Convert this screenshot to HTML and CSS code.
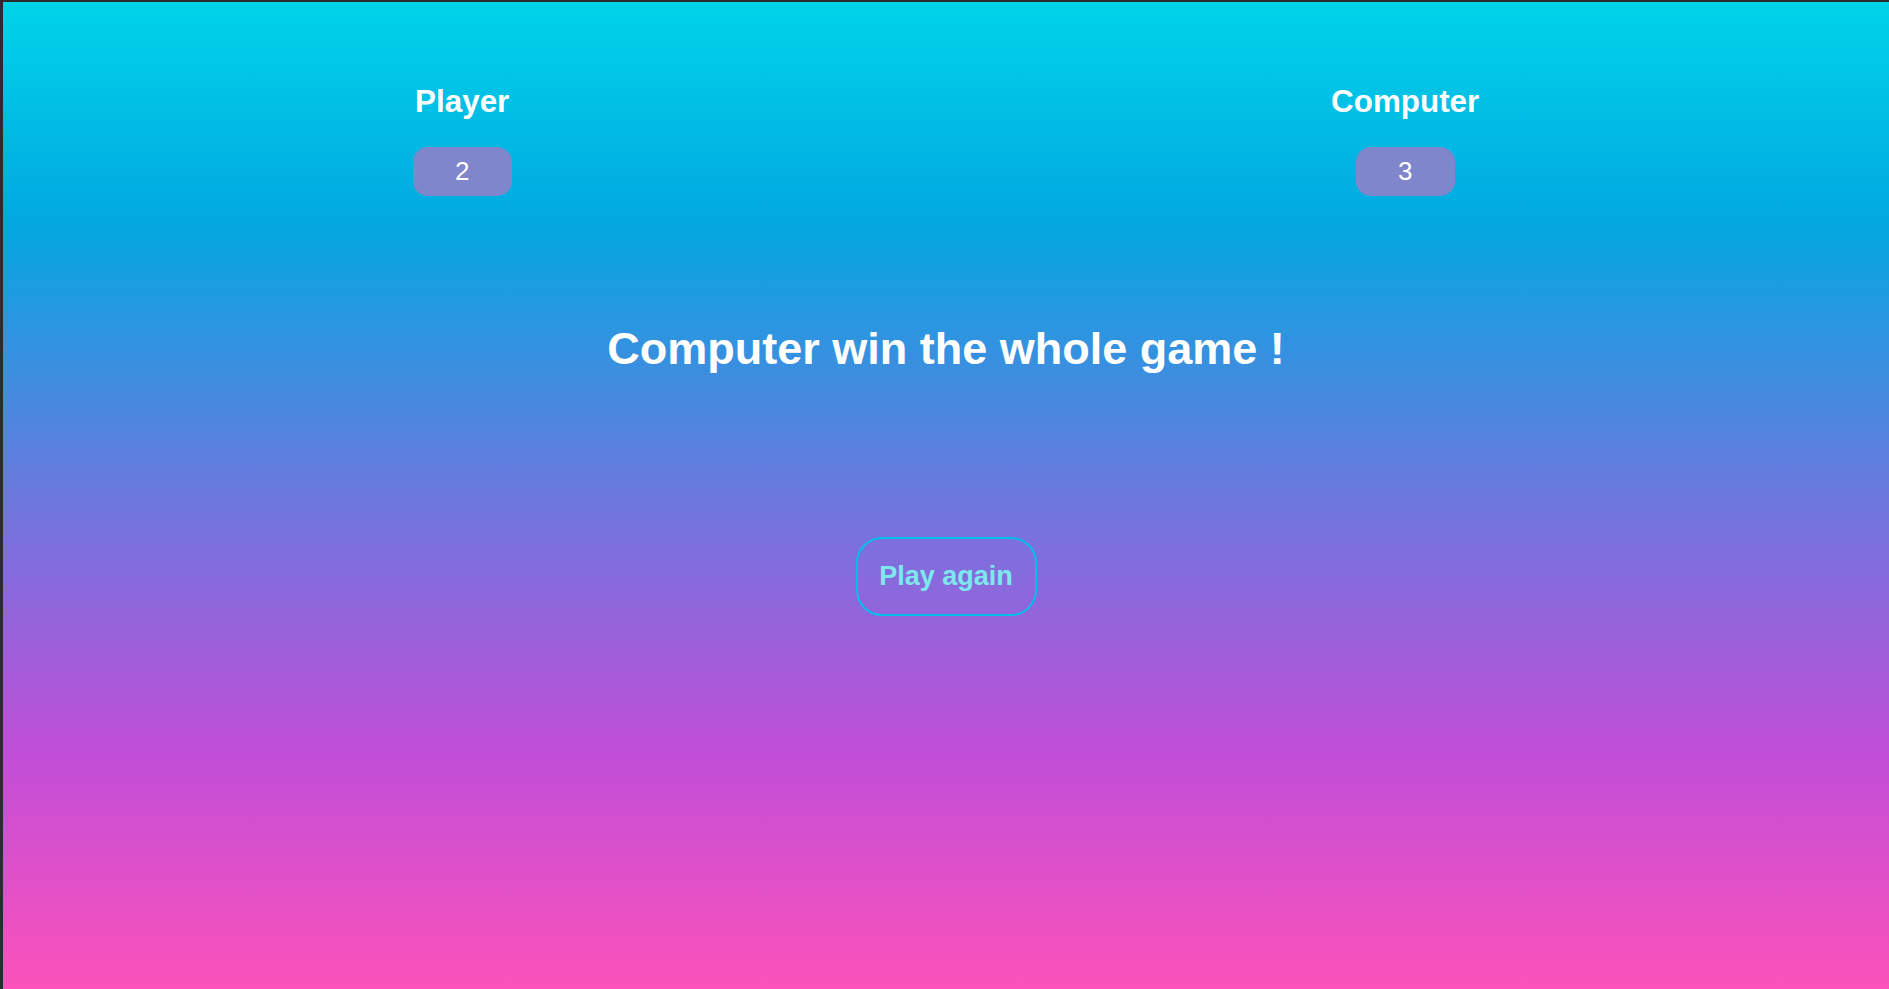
FILE: index.html
```html
<!DOCTYPE html>
<html lang="en">
<head>
<meta charset="utf-8">
<title>Rock Paper Scissors</title>
<link rel="stylesheet" href="styles.css">
</head>
<body>
<div class="frame">
  <div class="scores">
    <div class="side">
      <h1 class="side-name">Player</h1>
      <div class="score">2</div>
    </div>
    <div class="side">
      <h1 class="side-name">Computer</h1>
      <div class="score">3</div>
    </div>
  </div>
  <h2 class="result">Computer win the whole game !</h2>
  <div class="actions">
    <button class="again">Play again</button>
  </div>
</div>
</body>
</html>
```
FILE: styles.css
```css
html, body {
  margin: 0;
  padding: 0;
  height: 100%;
}
body {
  background: #2c2c2c;
  font-family: "Liberation Sans", Arial, sans-serif;
  color: #fff;
  overflow: hidden;
}
.frame {
  box-sizing: border-box;
  height: 989px;
  margin-left: 3px;
  margin-top: 2px;
  padding-top: 81px;
  background: linear-gradient(to bottom,
    #00d4ea 0%,
    #02a9e1 22%,
    #6c78de 50%,
    #c14ed8 76%,
    #fc52ba 100%);
}
.scores {
  display: flex;
  justify-content: space-around;
}
.side {
  display: flex;
  flex-direction: column;
  align-items: center;
}
.side-name {
  margin: 0 0 27px;
  font-size: 31.4px;
  line-height: 37px;
  font-weight: bold;
}
.score {
  width: 99px;
  height: 49px;
  border-radius: 15px;
  background: #7f86cc;
  display: flex;
  align-items: center;
  justify-content: center;
  font-size: 26px;
}
.result {
  margin: 127px 0 0;
  text-align: center;
  font-size: 45px;
  line-height: 52px;
  font-weight: bold;
}
.actions {
  display: flex;
  justify-content: center;
  margin-top: 162px;
}
.again {
  box-sizing: border-box;
  width: 181px;
  height: 79px;
  border: 2px solid #00bfe8;
  border-radius: 26px;
  background: transparent;
  color: #7de8ee;
  font-family: "Liberation Sans", Arial, sans-serif;
  font-size: 27px;
  font-weight: bold;
  padding: 0;
  cursor: pointer;
}
```
